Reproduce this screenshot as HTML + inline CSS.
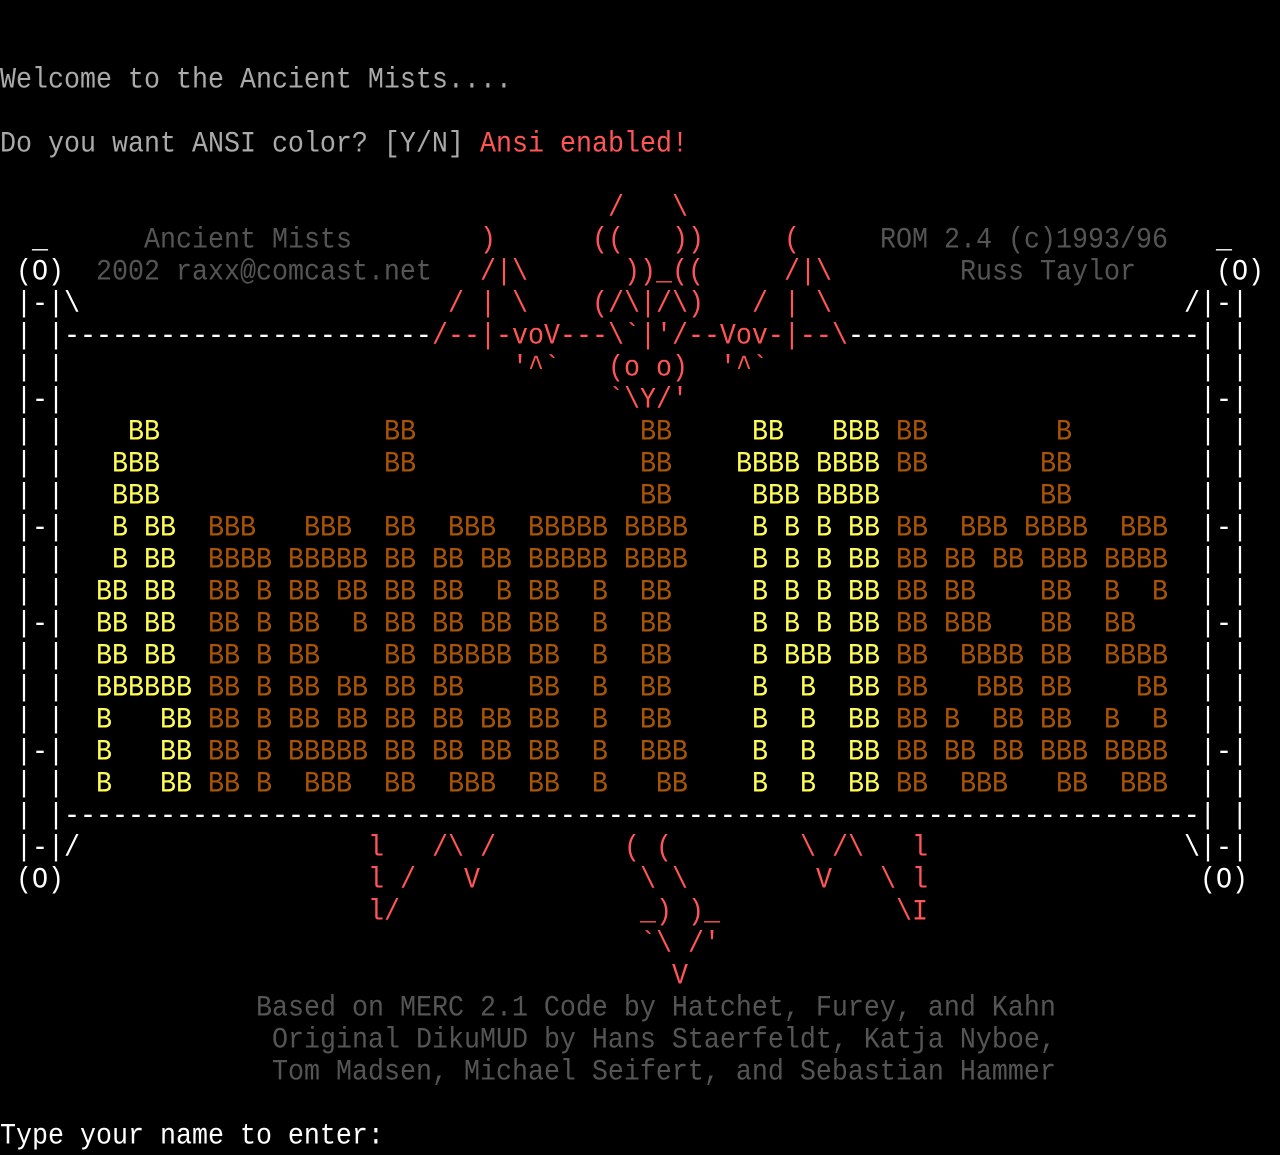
<!DOCTYPE html>
<html><head><meta charset="utf-8"><style>
html,body{margin:0;padding:0;background:#000;}
body{width:1280px;height:1152px;position:relative;overflow:hidden;font-family:"Liberation Mono","DejaVu Sans Mono",monospace;font-size:26.67px;}
.r{position:absolute;left:0;width:1280px;height:32px;line-height:32px;}
i{position:absolute;top:1px;font-style:normal;white-space:pre;transform:scaleY(1.12);transform-origin:50% 55%;}
.w{color:#fff}.g{color:#aaa}.d{color:#555}.e{color:#ff5555}.y{color:#ffff55}.o{color:#aa5500}
</style></head><body>
<div class="r" style="top:64px"><i class="g" style="left:0">Welcome to the Ancient Mists....</i></div>
<div class="r" style="top:128px"><i class="g" style="left:0">Do you want ANSI color? [Y/N] </i><i class="e" style="left:480px">Ansi enabled!</i></div>
<div class="r" style="top:192px"><i class="e" style="left:608px">/</i><i class="e" style="left:672px">\</i></div>
<div class="r" style="top:224px"><i class="w" style="left:32px">_</i><i class="d" style="left:144px">Ancient Mists</i><i class="e" style="left:480px">)</i><i class="e" style="left:592px">((</i><i class="e" style="left:672px">))</i><i class="e" style="left:784px">(</i><i class="d" style="left:880px">ROM 2.4 (c)1993/96</i><i class="w" style="left:1216px">_</i></div>
<div class="r" style="top:256px"><i class="w" style="left:16px">(O)</i><i class="d" style="left:96px">2002 raxx@comcast.net</i><i class="e" style="left:480px">/|\</i><i class="e" style="left:624px">))_((</i><i class="e" style="left:784px">/|\</i><i class="d" style="left:960px">Russ Taylor</i><i class="w" style="left:1216px">(O)</i></div>
<div class="r" style="top:288px"><i class="w" style="left:16px">|-|\</i><i class="e" style="left:448px">/ | \</i><i class="e" style="left:592px">(/\|/\)</i><i class="e" style="left:752px">/ | \</i><i class="w" style="left:1184px">/|-|</i></div>
<div class="r" style="top:320px"><i class="w" style="left:16px">| |-----------------------</i><i class="e" style="left:432px">/--|-voV---\`|'/--Vov-|--\</i><i class="w" style="left:848px">----------------------| |</i></div>
<div class="r" style="top:352px"><i class="w" style="left:16px">| |</i><i class="e" style="left:512px">'^`</i><i class="e" style="left:608px">(o o)</i><i class="e" style="left:720px">'^`</i><i class="w" style="left:1200px">| |</i></div>
<div class="r" style="top:384px"><i class="w" style="left:16px">|-|</i><i class="e" style="left:608px">`\Y/'</i><i class="w" style="left:1200px">|-|</i></div>

<div class="r" style="top:416px"><i class="w" style="left:16px">| |</i><i class="y" style="left:128px">BB</i><i class="o" style="left:384px">BB</i><i class="o" style="left:640px">BB</i><i class="y" style="left:752px">BB</i><i class="y" style="left:832px">BBB</i><i class="o" style="left:896px">BB</i><i class="o" style="left:1056px">B</i><i class="w" style="left:1200px">| |</i></div>
<div class="r" style="top:448px"><i class="w" style="left:16px">| |</i><i class="y" style="left:112px">BBB</i><i class="o" style="left:384px">BB</i><i class="o" style="left:640px">BB</i><i class="y" style="left:736px">BBBB</i><i class="y" style="left:816px">BBBB</i><i class="o" style="left:896px">BB</i><i class="o" style="left:1040px">BB</i><i class="w" style="left:1200px">| |</i></div>
<div class="r" style="top:480px"><i class="w" style="left:16px">| |</i><i class="y" style="left:112px">BBB</i><i class="o" style="left:640px">BB</i><i class="y" style="left:752px">BBB</i><i class="y" style="left:816px">BBBB</i><i class="o" style="left:1040px">BB</i><i class="w" style="left:1200px">| |</i></div>
<div class="r" style="top:512px"><i class="w" style="left:16px">|-|</i><i class="y" style="left:112px">B BB</i><i class="o" style="left:208px">BBB</i><i class="o" style="left:304px">BBB</i><i class="o" style="left:384px">BB</i><i class="o" style="left:448px">BBB</i><i class="o" style="left:528px">BBBBB</i><i class="o" style="left:624px">BBBB</i><i class="y" style="left:752px">B B B BB</i><i class="o" style="left:896px">BB</i><i class="o" style="left:960px">BBB</i><i class="o" style="left:1024px">BBBB</i><i class="o" style="left:1120px">BBB</i><i class="w" style="left:1200px">|-|</i></div>
<div class="r" style="top:544px"><i class="w" style="left:16px">| |</i><i class="y" style="left:112px">B BB</i><i class="o" style="left:208px">BBBB BBBBB BB BB BB BBBBB BBBB</i><i class="y" style="left:752px">B B B BB</i><i class="o" style="left:896px">BB BB BB BBB BBBB</i><i class="w" style="left:1200px">| |</i></div>
<div class="r" style="top:576px"><i class="w" style="left:16px">| |</i><i class="y" style="left:96px">BB BB</i><i class="o" style="left:208px">BB B BB BB BB BB  B BB  B  BB</i><i class="y" style="left:752px">B B B BB</i><i class="o" style="left:896px">BB BB    BB  B  B</i><i class="w" style="left:1200px">| |</i></div>
<div class="r" style="top:608px"><i class="w" style="left:16px">|-|</i><i class="y" style="left:96px">BB BB</i><i class="o" style="left:208px">BB B BB  B BB BB BB BB  B  BB</i><i class="y" style="left:752px">B B B BB</i><i class="o" style="left:896px">BB BBB   BB  BB</i><i class="w" style="left:1200px">|-|</i></div>
<div class="r" style="top:640px"><i class="w" style="left:16px">| |</i><i class="y" style="left:96px">BB BB</i><i class="o" style="left:208px">BB B BB    BB BBBBB BB  B  BB</i><i class="y" style="left:752px">B BBB BB</i><i class="o" style="left:896px">BB  BBBB BB  BBBB</i><i class="w" style="left:1200px">| |</i></div>
<div class="r" style="top:672px"><i class="w" style="left:16px">| |</i><i class="y" style="left:96px">BBBBBB</i><i class="o" style="left:208px">BB B BB BB BB BB    BB  B  BB</i><i class="y" style="left:752px">B  B  BB</i><i class="o" style="left:896px">BB   BBB BB    BB</i><i class="w" style="left:1200px">| |</i></div>
<div class="r" style="top:704px"><i class="w" style="left:16px">| |</i><i class="y" style="left:96px">B   BB</i><i class="o" style="left:208px">BB B BB BB BB BB BB BB  B  BB</i><i class="y" style="left:752px">B  B  BB</i><i class="o" style="left:896px">BB B  BB BB  B  B</i><i class="w" style="left:1200px">| |</i></div>
<div class="r" style="top:736px"><i class="w" style="left:16px">|-|</i><i class="y" style="left:96px">B   BB</i><i class="o" style="left:208px">BB B BBBBB BB BB BB BB  B  BBB</i><i class="y" style="left:752px">B  B  BB</i><i class="o" style="left:896px">BB BB BB BBB BBBB</i><i class="w" style="left:1200px">|-|</i></div>
<div class="r" style="top:768px"><i class="w" style="left:16px">| |</i><i class="y" style="left:96px">B   BB</i><i class="o" style="left:208px">BB B  BBB  BB  BBB  BB  B   BB</i><i class="y" style="left:752px">B  B  BB</i><i class="o" style="left:896px">BB  BBB   BB  BBB</i><i class="w" style="left:1200px">| |</i></div>
<div class="r" style="top:800px"><i class="w" style="left:16px">| |-----------------------------------------------------------------------| |</i></div>
<div class="r" style="top:832px"><i class="w" style="left:16px">|-|/</i><i class="e" style="left:368px">l</i><i class="e" style="left:432px">/\</i><i class="e" style="left:480px">/</i><i class="e" style="left:624px">(</i><i class="e" style="left:656px">(</i><i class="e" style="left:800px">\</i><i class="e" style="left:832px">/\</i><i class="e" style="left:912px">l</i><i class="w" style="left:1184px">\|-|</i></div>
<div class="r" style="top:864px"><i class="w" style="left:16px">(O)</i><i class="e" style="left:368px">l</i><i class="e" style="left:400px">/</i><i class="e" style="left:464px">V</i><i class="e" style="left:640px">\</i><i class="e" style="left:672px">\</i><i class="e" style="left:816px">V</i><i class="e" style="left:880px">\</i><i class="e" style="left:912px">l</i><i class="w" style="left:1200px">(O)</i></div>
<div class="r" style="top:896px"><i class="e" style="left:368px">l/</i><i class="e" style="left:640px">_) )_</i><i class="e" style="left:896px">\I</i></div>
<div class="r" style="top:928px"><i class="e" style="left:640px">`\ /'</i></div>
<div class="r" style="top:960px"><i class="e" style="left:672px">V</i></div>
<div class="r" style="top:992px"><i class="d" style="left:256px">Based on MERC 2.1 Code by Hatchet, Furey, and Kahn</i></div>
<div class="r" style="top:1024px"><i class="d" style="left:272px">Original DikuMUD by Hans Staerfeldt, Katja Nyboe,</i></div>
<div class="r" style="top:1056px"><i class="d" style="left:272px">Tom Madsen, Michael Seifert, and Sebastian Hammer</i></div>
<div class="r" style="top:1120px"><i class="w" style="left:0">Type your name to enter:</i></div>
</body></html>
